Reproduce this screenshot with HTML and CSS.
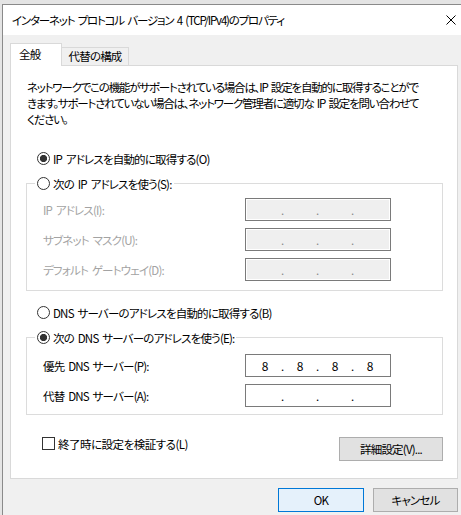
FILE: index.html
```html
<!DOCTYPE html>
<html lang="ja">
<head>
    <meta charset="UTF-8">
    <title>インターネット プロトコル バージョン 4 (TCP/IPv4)のプロパティ</title>
    <link rel="stylesheet" href="styles.css">
</head>
<body>
    <!--dialog window-->
    <div class="window">
        <div class="titlebar">
            <span class="title">インターネット プロトコル バージョン 4 (TCP/IPv4)のプロパティ</span>
            <span class="close">
                <svg width="10" height="10" viewBox="0 0 10 10"><path d="M0.5 0.5L9.5 9.5M9.5 0.5L0.5 9.5" stroke="#000" stroke-width="1"/></svg>
            </span>
        </div>

        <div class="client">
            <!--tab headers-->
            <div class="tabs">
                <div class="tab active">全般</div>
                <div class="tab">代替の構成</div>
            </div>

            <div class="panel">
                <p class="intro">ネットワークでこの機能がサポートされている場合は、IP 設定を自動的に取得することがで<br>きます。サポートされていない場合は、ネットワーク管理者に適切な IP 設定を問い合わせて<br>ください。</p>

                <div class="option first"><span class="radio checked"></span>IP アドレスを自動的に取得する(O)</div>

                <!--static ip group (disabled)-->
                <fieldset class="group">
                    <legend class="option"><span class="radio"></span>次の IP アドレスを使う(S):</legend>
                    <div class="rows ip-rows">
                        <div class="row disabled">
                            <span class="label">IP アドレス(I):</span>
                            <div class="ipbox"><span class="oct"></span><span class="dot">.</span><span class="oct"></span><span class="dot">.</span><span class="oct"></span><span class="dot">.</span><span class="oct"></span></div>
                        </div>
                        <div class="row disabled">
                            <span class="label">サブネット マスク(U):</span>
                            <div class="ipbox"><span class="oct"></span><span class="dot">.</span><span class="oct"></span><span class="dot">.</span><span class="oct"></span><span class="dot">.</span><span class="oct"></span></div>
                        </div>
                        <div class="row disabled">
                            <span class="label">デフォルト ゲートウェイ(D):</span>
                            <div class="ipbox"><span class="oct"></span><span class="dot">.</span><span class="oct"></span><span class="dot">.</span><span class="oct"></span><span class="dot">.</span><span class="oct"></span></div>
                        </div>
                    </div>
                </fieldset>

                <div class="option dns-auto"><span class="radio"></span>DNS サーバーのアドレスを自動的に取得する(B)</div>

                <!--dns group-->
                <fieldset class="group">
                    <legend class="option"><span class="radio checked"></span>次の DNS サーバーのアドレスを使う(E):</legend>
                    <div class="rows dns-rows">
                        <div class="row">
                            <span class="label">優先 DNS サーバー(P):</span>
                            <div class="ipbox"><span class="oct">8</span><span class="dot">.</span><span class="oct">8</span><span class="dot">.</span><span class="oct">8</span><span class="dot">.</span><span class="oct">8</span></div>
                        </div>
                        <div class="row">
                            <span class="label">代替 DNS サーバー(A):</span>
                            <div class="ipbox"><span class="oct"></span><span class="dot">.</span><span class="oct"></span><span class="dot">.</span><span class="oct"></span><span class="dot">.</span><span class="oct"></span></div>
                        </div>
                    </div>
                </fieldset>

                <div class="bottom-row">
                    <div class="check"><span class="box"></span>終了時に設定を検証する(L)</div>
                    <button class="btn advanced">詳細設定(V)...</button>
                </div>
            </div>

            <!--dialog buttons-->
            <div class="footer">
                <button class="btn ok">OK</button>
                <button class="btn cancel">キャンセル</button>
            </div>
        </div>
    </div>
</body>
</html>
```

FILE: styles.css
```css
* {
    box-sizing: border-box;
}

body {
    margin: 0;
    padding: 4px 0 0 2px;
    background: #e4e4e4;
    overflow: hidden;
    font-family: "Noto Sans CJK JP", "Noto Sans", sans-serif;
    font-size: 11.5px;
    letter-spacing: -0.8px;
    word-spacing: 2px;
    font-feature-settings: "palt";
    color: #000;
}

/* the dialog itself */
.window {
    width: 472px;
    border-top: 1px solid #8a8a8a;
    border-left: 1px solid #8a8a8a;
    background: #f0f0f0;
}

.titlebar {
    display: flex;
    align-items: center;
    height: 30px;
    padding-left: 9px;
    background: #fff;
}

.title {
    letter-spacing: -1.2px;
}

.close {
    margin-left: auto;
    width: 46px;
    height: 30px;
    display: flex;
    align-items: center;
    justify-content: center;
}

.client {
    padding: 8px 0 10px 7px;
}

/* tabs */
.tabs {
    display: flex;
    align-items: flex-end;
    height: 22px;
}

.tab {
    position: relative;
    height: 18px;
    width: 67px;
    line-height: 17px;
    text-align: center;
    border: 1px solid #d9d9d9;
    border-left: none;
    border-bottom: none;
    background: #f0f0f0;
}

.tab.active {
    z-index: 1;
    width: 52px;
    height: 23px;
    margin-bottom: -1px;
    padding-left: 8px;
    line-height: 20px;
    text-align: left;
    border-left: 1px solid #d9d9d9;
    background: #fff;
}

.panel {
    width: 448px;
    padding: 13px 14px 17px 15px;
    border: 1px solid #d9d9d9;
    background: #fff;
}

.intro {
    margin: 0 0 0 1px;
    line-height: 16px;
    letter-spacing: -1.2px;
    white-space: nowrap;
}

/* radio options */
.option {
    display: flex;
    align-items: center;
    height: 17px;
    white-space: nowrap;
}

.option.first {
    margin: 23px 0 0 11px;
}

.option.dns-auto {
    margin: 13px 0 0 11px;
}

.radio {
    width: 13px;
    height: 13px;
    margin-right: 3px;
    border: 1px solid #333;
    border-radius: 50%;
    background: #fff;
}

.radio.checked {
    background: radial-gradient(circle, #333 0, #333 3.3px, #fff 3.9px);
}

/* group boxes */
.group {
    margin: 8px 0 0 0;
    padding: 0;
    min-width: 0;
    border: 1px solid #dcdcdc;
}

.group legend {
    margin-left: 8px;
    padding: 0 2px;
}

.rows {
    display: flex;
    flex-direction: column;
    gap: 7px;
    padding-left: 16px;
}

.ip-rows {
    padding-top: 6px;
    padding-bottom: 9px;
}

.dns-rows {
    padding-top: 8px;
    padding-bottom: 7px;
}

.row {
    display: flex;
    align-items: center;
    height: 23px;
}

.label {
    width: 202px;
    white-space: nowrap;
}

.row.disabled .label {
    color: #a3a3a3;
}

.ipbox {
    display: flex;
    align-items: center;
    width: 146px;
    height: 23px;
    padding-left: 4px;
    border: 1px solid #7a7a7a;
    background: #fff;
    letter-spacing: 0;
}

.row.disabled .ipbox {
    background: #efefef;
    box-shadow: inset 0 0 0 1px #fff;
}

.oct {
    width: 30px;
    text-align: center;
    font-size: 12px;
}

.dot {
    width: 5px;
    text-align: center;
}

.row.disabled .dot {
    color: #8a8a8a;
}

/* checkbox + advanced button */
.bottom-row {
    display: flex;
    align-items: flex-start;
    justify-content: space-between;
    margin-top: 22px;
}

.check {
    display: flex;
    align-items: center;
    margin-left: 16px;
    height: 13px;
    letter-spacing: -0.5px;
    white-space: nowrap;
}

.box {
    width: 13px;
    height: 13px;
    margin-right: 3px;
    border: 1px solid #333;
    background: #fff;
}

.btn {
    height: 24px;
    padding: 0;
    font-family: inherit;
    font-size: 11.5px;
    letter-spacing: -0.8px;
    font-feature-settings: "palt";
    color: #000;
    border: 1px solid #adadad;
    background: #e1e1e1;
}

.advanced {
    width: 104px;
}

.footer {
    display: flex;
    justify-content: flex-end;
    gap: 9px;
    width: 448px;
    margin-top: 9px;
}

.ok {
    width: 86px;
    border-color: #0078d7;
    background: #e5f1fb;
}

.cancel {
    width: 85px;
}
```
